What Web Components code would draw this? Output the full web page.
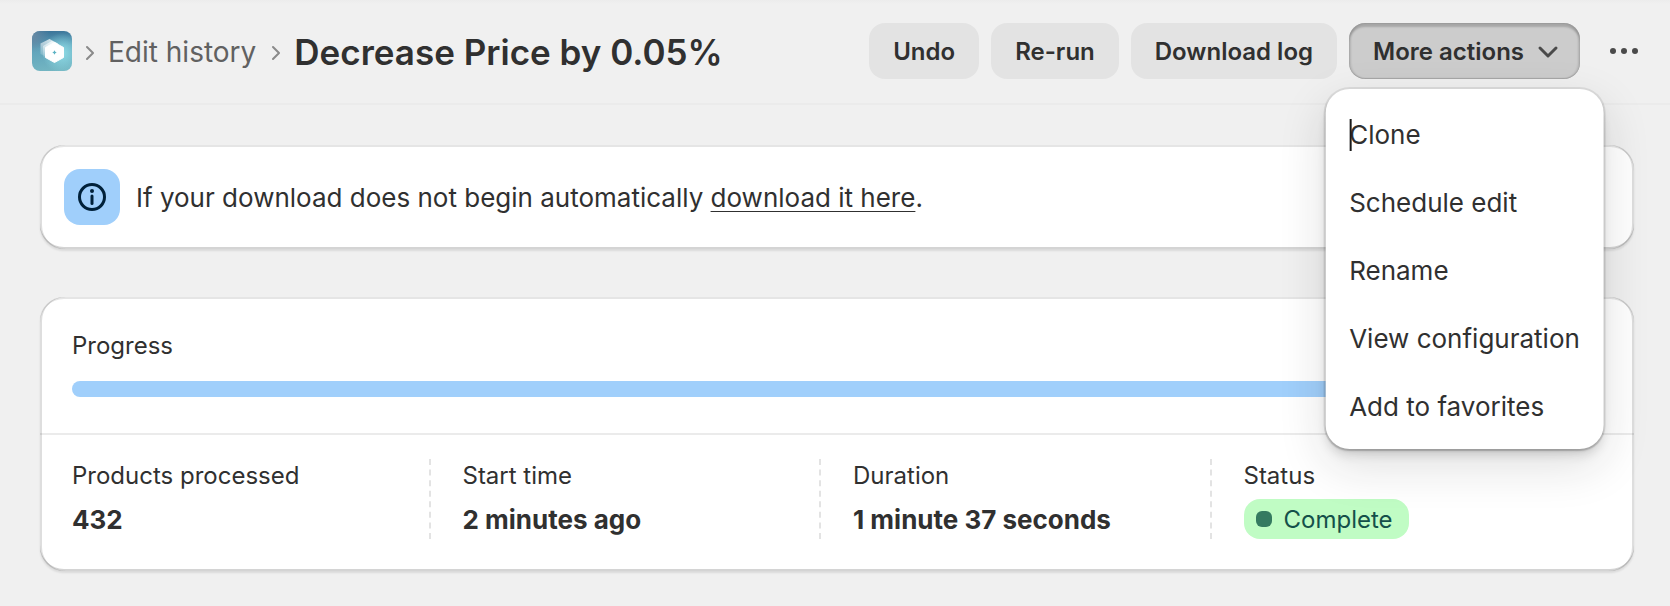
<!DOCTYPE html>
<html lang="en">
<head>
<meta charset="utf-8">
<title>Edit history</title>
<style>
    body {
        margin: 0;
        background: #f0f0f0;
        color: #303030;
        font-family: Inter, "Liberation Sans", sans-serif;
        font-size: 26px;
        line-height: 32px;
    }
</style>
</head>
<body>

<edit-page></edit-page>

<script>
function makeTemplate(html) {
    const template = document.createElement('template');
    template.innerHTML = html;
    return template;
}

// Attaches an open shadow root and fills it from the class's template
class BaseElement extends HTMLElement {
    constructor() {
        super();
        this.attachShadow({mode: 'open'});
        this.shadowRoot.appendChild(this.constructor.template.content.cloneNode(true));
    }
}

class AppLogo extends BaseElement {
    static template = makeTemplate(`
        <style>
            :host { display: block; flex: none; width: 40px; height: 40px; }
            svg { display: block; width: 100%; height: 100%; }
        </style>
        <svg viewBox="0 0 40 40" aria-hidden="true">
            <defs>
                <linearGradient id="base" x1="0.5" y1="0" x2="0.6" y2="1">
                    <stop offset="0" stop-color="#3b7499"/>
                    <stop offset="0.4" stop-color="#5fa3bb"/>
                    <stop offset="1" stop-color="#74b6c2"/>
                </linearGradient>
                <radialGradient id="corner" cx="0" cy="0.1" r="0.45">
                    <stop offset="0" stop-color="#6a8ba5"/>
                    <stop offset="1" stop-color="#6a8ba5" stop-opacity="0"/>
                </radialGradient>
                <radialGradient id="glow" cx="0.75" cy="0.55" r="0.5">
                    <stop offset="0" stop-color="#8fdce6"/>
                    <stop offset="1" stop-color="#8fdce6" stop-opacity="0"/>
                </radialGradient>
                <linearGradient id="fade" x1="0.6" y1="0" x2="0.4" y2="1">
                    <stop offset="0" stop-color="#fff" stop-opacity="0.75"/>
                    <stop offset="1" stop-color="#fff" stop-opacity="0.1"/>
                </linearGradient>
            </defs>
            <rect width="40" height="40" rx="8" fill="url(#base)"/>
            <rect width="40" height="40" rx="8" fill="url(#corner)"/>
            <rect width="40" height="40" rx="8" fill="url(#glow)"/>
            <path d="M17.500 8 L26 12.500 V22 L17.500 27.500 L8.500 23 V12.500 Z" fill="url(#fade)"/>
            <path d="M20 10 L24 12 V24 L13 27 L11 25.500 V15 Z" fill="url(#fade)"/>
            <path d="M22.500 11.500 L31.500 16.500 V26.500 L22.500 31.500 L13.500 26.500 V16.500 Z" fill="#fff" stroke="#fff" stroke-width="1" stroke-linejoin="round"/>
            <path d="M22.500 19.300 L23.300 20.700 L24.700 21.500 L23.300 22.300 L22.500 23.700 L21.700 22.300 L20.300 21.500 L21.700 20.700 Z" fill="#5cb3c4"/>
        </svg>
    `);
}

class CrumbArrow extends BaseElement {
    static template = makeTemplate(`
        <style>
            :host { display: block; flex: none; padding-top: 4px; color: #8a8a8a; }
            svg { display: block; }
        </style>
        <svg width="8" height="16" viewBox="0 0 8 16" fill="none" stroke="currentColor" stroke-width="2" stroke-linecap="round" stroke-linejoin="round" aria-hidden="true">
            <path d="M1 2 L7 8 L1 14"/>
        </svg>
    `);
}

class ActionButton extends BaseElement {
    static template = makeTemplate(`
        <style>
            :host { display: block; }
            button {
                display: flex;
                align-items: center;
                gap: 12px;
                box-sizing: border-box;
                height: 56px;
                padding: 2px 24px 0;
                border: none;
                border-radius: 16px;
                background: #e3e3e3;
                color: inherit;
                font: inherit;
                font-size: 24px;
                font-weight: 580;
                white-space: nowrap;
                cursor: pointer;
            }
            button:hover { background: #d9d9d9; }
            svg { display: none; margin-right: -4px; }
            :host([disclosure]) svg { display: block; }
            :host([pressed]) button {
                background: #ccc;
                box-shadow:
                    inset -2px 0 2px rgba(26, 26, 26, 0.122),
                    inset 2px 0 2px rgba(26, 26, 26, 0.122),
                    inset 0 4px 2px rgba(26, 26, 26, 0.2),
                    inset 0 -1px 1px rgba(26, 26, 26, 0.15);
            }
        </style>
        <button type="button">
            <slot></slot>
            <svg width="24" height="16" viewBox="0 0 24 16" fill="none" stroke="#4a4a4a" stroke-width="3" stroke-linecap="round" stroke-linejoin="round" aria-hidden="true">
                <path d="M4 4 L12 12 L20 4"/>
            </svg>
        </button>
    `);
}

class OverflowButton extends BaseElement {
    static template = makeTemplate(`
        <style>
            :host { display: block; }
            button {
                display: flex;
                align-items: center;
                justify-content: center;
                width: 64px;
                height: 56px;
                padding: 0;
                border: none;
                border-radius: 16px;
                background: transparent;
                color: #4a4a4a;
                cursor: pointer;
            }
        </style>
        <button type="button" aria-label="Options">
            <svg width="28" height="8" viewBox="0 0 28 8" fill="currentColor" aria-hidden="true">
                <circle cx="3" cy="4" r="3"/>
                <circle cx="14" cy="4" r="3"/>
                <circle cx="25" cy="4" r="3"/>
            </svg>
        </button>
    `);
}

class MenuItem extends BaseElement {
    static template = makeTemplate(`
        <style>
            :host { display: block; }
            button {
                position: relative;
                display: block;
                width: 100%;
                height: 64px;
                padding: 0 12px;
                border: none;
                border-radius: 16px;
                background: transparent;
                color: inherit;
                font: inherit;
                text-align: left;
                white-space: nowrap;
                cursor: pointer;
            }
            button:hover { background: #f1f1f1; }
            :host([caret]) button::before {
                content: "";
                position: absolute;
                left: 12px;
                top: 16px;
                width: 2px;
                height: 32px;
                background: #1a1a1a;
            }
        </style>
        <button type="button" role="menuitem"><slot></slot></button>
    `);
}

class ActionMenu extends BaseElement {
    static template = makeTemplate(`
        <style>
            :host { display: block; position: relative; }
            .popover {
                position: absolute;
                z-index: 10;
                top: calc(100% + 10px);
                left: 50%;
                transform: translateX(-50%);
                display: flex;
                flex-direction: column;
                gap: 4px;
                padding: 14px 12px 10px;
                border-radius: 24px;
                background: #fff;
                box-shadow:
                    0 0 0 2px rgba(0, 0, 0, 0.08),
                    0 2px 2px rgba(0, 0, 0, 0.15),
                    0 8px 12px -4px rgba(26, 26, 26, 0.2),
                    0 16px 48px rgba(26, 26, 26, 0.14);
            }
        </style>
        <slot name="activator"></slot>
        <div class="popover" role="menu"><slot></slot></div>
    `);
}

class PageHeader extends BaseElement {
    static template = makeTemplate(`
        <style>
            :host { display: block; }
            header {
                display: flex;
                align-items: center;
                justify-content: space-between;
                gap: 24px;
                padding: 23px 14px 24px 32px;
                border-bottom: 2px solid #ebebeb;
                background: linear-gradient(#ececec, #f0f0f0 4px);
            }
            nav { display: flex; align-items: center; gap: 16px; white-space: nowrap; }
            a { padding-top: 2px; color: #616161; font-size: 28px; text-decoration: none; }
            h1 { margin: 0; padding-top: 2px; font-size: 35px; line-height: 40px; font-weight: 620; }
            .actions { display: flex; align-items: center; gap: 12px; }
            crumb-arrow { margin: 0 -2px; }
            a + crumb-arrow { margin-left: 0; }
        </style>
        <header>
            <nav aria-label="Breadcrumb">
                <app-logo></app-logo>
                <crumb-arrow></crumb-arrow>
                <a href="#history"><slot name="parent"></slot></a>
                <crumb-arrow></crumb-arrow>
                <h1><slot name="title"></slot></h1>
            </nav>
            <div class="actions"><slot></slot></div>
        </header>
    `);
}

class SurfaceCard extends BaseElement {
    static template = makeTemplate(`
        <style>
            :host {
                display: block;
                position: relative;
                border-radius: 24px;
                background: #fff;
                box-shadow: 0 2px 2px rgba(26, 26, 26, 0.1);
            }
            /* bevel lies over the content so that dividers run under it */
            :host::after {
                content: "";
                position: absolute;
                inset: 0;
                border-radius: inherit;
                pointer-events: none;
                box-shadow:
                    inset 2px 0 0 rgba(0, 0, 0, 0.13),
                    inset -2px 0 0 rgba(0, 0, 0, 0.13),
                    inset 0 -2px 0 rgba(0, 0, 0, 0.17),
                    inset 0 2px 0 rgba(204, 204, 204, 0.5);
            }
        </style>
        <slot></slot>
    `);
}

class InfoBanner extends BaseElement {
    static template = makeTemplate(`
        <style>
            :host { display: flex; align-items: center; gap: 16px; padding: 24px; }
            .icon {
                display: flex;
                align-items: center;
                justify-content: center;
                flex: none;
                width: 56px;
                height: 56px;
                border-radius: 16px;
                background: #a0cffb;
                color: #00213a;
            }
            p { margin: 0; padding-top: 2px; }
        </style>
        <span class="icon">
            <svg width="28" height="28" viewBox="0 0 28 28" aria-hidden="true">
                <circle cx="14" cy="14" r="12.500" fill="none" stroke="currentColor" stroke-width="3"/>
                <circle cx="14" cy="8" r="2" fill="currentColor"/>
                <path d="M14 13 V20.500" stroke="currentColor" stroke-width="3" stroke-linecap="round"/>
            </svg>
        </span>
        <p><slot></slot></p>
    `);
}

class ProgressMeter extends BaseElement {
    static template = makeTemplate(`
        <style>
            :host { display: flex; flex-direction: column; gap: 18px; padding: 32px 32px 36px; }
            label { font-size: 24px; line-height: 34px; }
            progress {
                appearance: none;
                display: block;
                width: 100%;
                height: 16px;
                border: none;
                border-radius: 8px;
                overflow: hidden;
            }
            progress::-webkit-progress-bar { background: #ebebeb; }
            progress::-webkit-progress-value { background: #a0cffb; }
        </style>
        <label for="bar"><slot></slot></label>
        <progress id="bar" max="100"></progress>
    `);

    connectedCallback() {
        this.shadowRoot.querySelector('progress').value = Number(this.getAttribute('value'));
    }
}

class StatList extends BaseElement {
    static template = makeTemplate(`
        <style>
            :host {
                display: grid;
                grid-template-columns: repeat(4, 1fr);
                padding: 24px 32px 32px 0;
                border-top: 2px solid #ebebeb;
            }
        </style>
        <slot></slot>
    `);
}

class StatItem extends BaseElement {
    static template = makeTemplate(`
        <style>
            :host {
                display: flex;
                flex-direction: column;
                gap: 6px;
                padding-left: 32px;
                border-right: 2px dashed #e3e3e3;
            }
            :host(:last-child) { border-right: none; }
            .label { font-size: 24px; line-height: 34px; }
            .value { display: flex; height: 40px; font-weight: 650; line-height: 42px; }
        </style>
        <span class="label"><slot name="label"></slot></span>
        <span class="value"><slot></slot></span>
    `);
}

class StatusBadge extends BaseElement {
    static template = makeTemplate(`
        <style>
            :host {
                display: flex;
                align-items: center;
                gap: 12px;
                height: 40px;
                padding: 0 16px 0 12px;
                border-radius: 16px;
                background: #c0fcc4;
                color: #14504a;
                font-size: 24px;
                font-weight: 400;
            }
            .pip { width: 16px; height: 16px; border-radius: 6px; background: #357a60; }
            .text { padding-top: 2px; }
        </style>
        <span class="pip"></span>
        <span class="text"><slot></slot></span>
    `);
}

class EditPage extends BaseElement {
    static template = makeTemplate(`
        <style>
            :host { display: block; }
            main { display: flex; flex-direction: column; gap: 48px; padding: 40px 36px 35px 40px; }
            a {
                color: inherit;
                text-decoration: underline 1px;
                text-decoration-skip-ink: none;
                text-underline-offset: 4px;
            }
        </style>
        <page-header>
            <span slot="parent">Edit history</span>
            <span slot="title">Decrease Price by 0.05%</span>
            <action-button>Undo</action-button>
            <action-button>Re-run</action-button>
            <action-button>Download log</action-button>
            <action-menu>
                <action-button slot="activator" disclosure pressed>More actions</action-button>
                <menu-item caret>Clone</menu-item>
                <menu-item>Schedule edit</menu-item>
                <menu-item>Rename</menu-item>
                <menu-item>View configuration</menu-item>
                <menu-item>Add to favorites</menu-item>
            </action-menu>
            <overflow-button></overflow-button>
        </page-header>
        <main>
            <surface-card>
                <info-banner>If your download does not begin automatically <a href="#download">download it here</a>.</info-banner>
            </surface-card>
            <surface-card>
                <progress-meter value="100">Progress</progress-meter>
                <stat-list>
                    <stat-item><span slot="label">Products processed</span>432</stat-item>
                    <stat-item><span slot="label">Start time</span>2 minutes ago</stat-item>
                    <stat-item><span slot="label">Duration</span>1 minute 37 seconds</stat-item>
                    <stat-item><span slot="label">Status</span><status-badge>Complete</status-badge></stat-item>
                </stat-list>
            </surface-card>
        </main>
    `);
}

window.customElements.define('app-logo', AppLogo);
window.customElements.define('crumb-arrow', CrumbArrow);
window.customElements.define('action-button', ActionButton);
window.customElements.define('overflow-button', OverflowButton);
window.customElements.define('menu-item', MenuItem);
window.customElements.define('action-menu', ActionMenu);
window.customElements.define('page-header', PageHeader);
window.customElements.define('surface-card', SurfaceCard);
window.customElements.define('info-banner', InfoBanner);
window.customElements.define('progress-meter', ProgressMeter);
window.customElements.define('stat-list', StatList);
window.customElements.define('stat-item', StatItem);
window.customElements.define('status-badge', StatusBadge);
window.customElements.define('edit-page', EditPage);
</script>
</body>
</html>
